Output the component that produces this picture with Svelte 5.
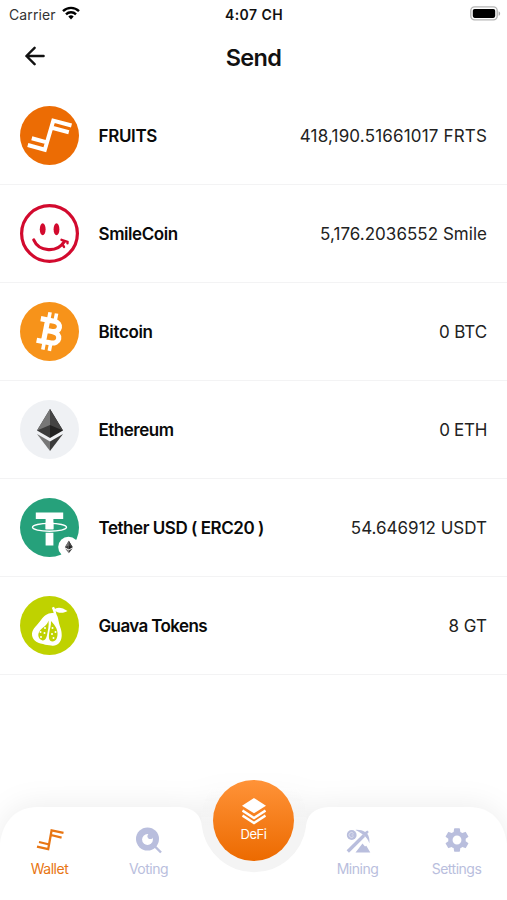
<script lang="ts">
	interface Token {
		id: string;
		name: string;
		balance: string;
		nameSpacing: number;
		balanceSpacing: number;
	}

	// spacing is in px, tuned per string
	const tokens: Token[] = [
		{ id: 'frts', name: 'FRUITS', balance: '418,190.51661017 FRTS', nameSpacing: -0.35, balanceSpacing: 0.17 },
		{ id: 'smile', name: 'SmileCoin', balance: '5,176.2036552 Smile', nameSpacing: -0.42, balanceSpacing: 0.03 },
		{ id: 'btc', name: 'Bitcoin', balance: '0 BTC', nameSpacing: -0.37, balanceSpacing: -0.1 },
		{ id: 'eth', name: 'Ethereum', balance: '0 ETH', nameSpacing: -0.5, balanceSpacing: -0.3 },
		{ id: 'usdt', name: 'Tether USD ( ERC20 )', balance: '54.646912 USDT', nameSpacing: -0.46, balanceSpacing: 0 },
		{ id: 'guava', name: 'Guava Tokens', balance: '8 GT', nameSpacing: -0.62, balanceSpacing: 0 }
	];

	const tabs = ['Wallet', 'Voting', 'DeFi', 'Mining', 'Settings'];
	let active = $state('Wallet');
</script>

{#snippet ethMark()}
	<path d="M30 9 17 30.5 30 38z" fill="#3c3c3c" />
	<path d="M30 9v29l13-7.5z" fill="#222" />
	<path d="M30 9 17 30.5 30 25z" fill="#777" />
	<path d="M30 9v16l13 5.5z" fill="#444" />
	<path d="m17 34 13 7.5V51z" fill="#777" />
	<path d="m43 34-13 7.5V51z" fill="#3b3b3b" />
{/snippet}

<div class="app">
	<div class="status">
		<div class="carrier">
			<span>Carrier</span>
			<svg width="18" height="14" viewBox="0 0 18 14">
				<g fill="none" stroke="#000" stroke-width="2.4">
					<path d="M1 5.2a11.4 11.4 0 0 1 16 0" />
					<path d="M4 8.3a7.1 7.1 0 0 1 10 0" />
				</g>
				<path d="M6.3 10.6a3.9 3.9 0 0 1 5.4 0L9 13.5z" />
			</svg>
		</div>
		<span class="time">4:07 CH</span>
		<svg class="battery" width="31" height="15" viewBox="0 0 31 15">
			<rect x=".8" y=".9" width="26.4" height="13" rx="3.8" fill="#fff" stroke="#b5b5b5" stroke-width="1.4" />
			<rect x="2.8" y="2.9" width="22.4" height="9" rx="1.8" />
			<path d="M28.6 5.2c2 .8 2 3.8 0 4.6z" fill="#aaa" />
		</svg>
	</div>

	<header>
		<button class="back" aria-label="Back">
			<svg width="20" height="20" viewBox="0 0 20 20">
				<path
					d="M18.6 10H1.5M9.6 1.8 1.4 10l8.2 8.2"
					fill="none"
					stroke="#111"
					stroke-width="2.4"
					stroke-linecap="round"
					stroke-linejoin="round"
				/>
			</svg>
		</button>
		<h1>Send</h1>
	</header>

	<main>
		{#each tokens as token (token.id)}
			<div class="row">
				<svg class="logo" viewBox="0 0 59 59">
					{#if token.id === 'frts'}
						<circle cx="29.5" cy="29.5" r="29.5" fill="#ec6c04" />
						<path
							d="M51.5 19.5 33.3 14.6 24.8 43.7 7.8 39M32 21.8l16.8 4.5M11.8 32.2l16 4.4"
							fill="none"
							stroke="#fff"
							stroke-width="4"
						/>
					{:else if token.id === 'smile'}
						<circle cx="29.5" cy="29.5" r="27.9" fill="#fff" stroke="#d20a2e" stroke-width="3.2" />
						<ellipse cx="22.7" cy="25.3" rx="2.9" ry="6" fill="#d20a2e" />
						<ellipse cx="36.5" cy="25.3" rx="2.9" ry="6" fill="#d20a2e" />
						<g fill="none" stroke="#d20a2e" stroke-linecap="round">
							<path d="M13.8 36c5 12 23.5 12.8 30.2 2" stroke-width="3.2" />
							<path d="m41.5 35.8 6 2v1.4M42.5 40.5l1.5 2.4" stroke-width="2.4" />
						</g>
					{:else if token.id === 'btc'}
						<circle cx="29.5" cy="29.5" r="29.5" fill="#f7931a" />
						<g transform="rotate(11 29.5 29.5)" fill="none" stroke="#fff">
							<path d="M26.4 10.5v8M33 10.5v8M26.4 40v8.5M33 40v8.5" stroke-width="3.6" />
							<path
								d="M18.5 18.5H32c8.6 0 8.6 10.5 0 10.5h-6.5M32 29c10.5 0 10.5 11.5 0 11.5H18.5M25.5 18.5v22"
								stroke-width="5.2"
							/>
						</g>
					{:else if token.id === 'eth'}
						<circle cx="29.5" cy="29.5" r="29.5" fill="#eff1f4" />
						{@render ethMark()}
					{:else if token.id === 'usdt'}
						<circle cx="29.5" cy="29.5" r="29.5" fill="#26a17b" />
						<path d="M15.8 14.5h27.4V21h-9.8v26.4h-7.8V21h-9.8z" fill="#fff" />
						<path d="M12.5 29.3c0 5.2 34 5.2 34 0" fill="none" stroke="#26a17b" stroke-width="3.2" />
						<ellipse cx="29.5" cy="29.3" rx="17" ry="3.9" fill="none" stroke="#fff" stroke-width="1.4" />
						<path d="M25.6 24.5h7.8V31h-7.8z" fill="#fff" />
						<circle cx="48.5" cy="49" r="10.3" fill="#fff" />
						<g transform="translate(39.8 40) scale(.3)">
							{@render ethMark()}
						</g>
					{:else}
						<circle cx="29.5" cy="29.5" r="29.5" fill="#bfd200" />
						<path
							d="M33.2 17c4 0 4.8 4.5 5.5 8.5 1 5.5 3.4 8.5 3 14.5-.5 7-5 10.5-10.5 9.5-3-.2-5-.3-8.2-1.5C16 47 11.600 43 12 37.500c.5-5 5.500-8.500 9-13.500 3-4.500 7-7.500 12.200-7z"
							fill="#fff"
						/>
						<path
							d="M28.5 24.5c-1 4.5-5.5 6.5-8.5 10-3 3.8-1.8 8.3 2 9.7 2.6.9 4.3-1.6 5-5 .9-4.6 2.2-9.7 1.5-14.7zM31 25c3 3.500 6 6.500 6.500 11.500.4 5-1.500 9-5 9-3.600 0-4-4-3.300-8.500.6-4 2-7.500 1.800-12z"
							fill="#bfd200"
						/>
						<g fill="#fff">
							<circle cx="25" cy="32" r="1" /><circle cx="20.5" cy="36" r="1" />
							<circle cx="24.5" cy="37" r="1" /><circle cx="21" cy="41" r="1" />
							<circle cx="32.5" cy="32" r="1" /><circle cx="32" cy="38" r="1" />
							<circle cx="35.5" cy="36" r="1" /><circle cx="33.5" cy="42" r="1" />
						</g>
						<path d="M34.2 19.5c-.5-3-1.2-5-2.4-7.8l2.2-1c1.5 2.5 2 5 2.5 8.5z" fill="#fff" />
						<path d="M34 14c2.5-3.5 8-3 13.5 1-4 2.6-9.5 2.6-13.5-1z" fill="#fff" />
					{/if}
				</svg>
				<span class="name" style="letter-spacing: {token.nameSpacing}px">{token.name}</span>
				<span class="balance" style="letter-spacing: {token.balanceSpacing}px">{token.balance}</span>
			</div>
		{/each}
	</main>

	<nav>
		<svg class="nav-shape" width="507" height="180" viewBox="0 0 507 180">
			<defs>
				<linearGradient id="notch" x1="0" y1="0" x2="0" y2="1">
					<stop offset=".2" stop-color="#f4f4f4" stop-opacity="0" />
					<stop offset=".55" stop-color="#f4f4f4" />
				</linearGradient>
			</defs>
			<circle cx="254" cy="100" r="53" fill="url(#notch)" />
			<path
				d="M0 124C3 101 16 87 38 87H176C193 87 201 94 202 107A52.5 52.5 0 0 0 306 107C307 94 315 87 332 87H469C491 87 504 101 507 124V180H0Z"
				fill="#fff"
			/>
		</svg>
		{#each tabs as tab}
			<button class="tab" class:active={active === tab} class:defi={tab === 'DeFi'} onclick={() => (active = tab)}>
				{#if tab === 'Wallet'}
					<svg width="28" height="28" viewBox="0 0 28 28">
						<path
							d="M27.5 6.8 15.6 4.3 12.2 23.2 1 20.6M15 9l10.6 2.7M3 16l10.3 2.5"
							fill="none"
							stroke="currentColor"
							stroke-width="2.3"
						/>
					</svg>
				{:else if tab === 'Voting'}
					<svg width="28" height="28" viewBox="0 0 28 28">
						<path d="m19.5 20 6.5 6.5" stroke="currentColor" stroke-width="2.4" />
						<circle cx="12.5" cy="13" r="11.5" fill="currentColor" />
						<circle cx="12.5" cy="13.5" r="5.4" fill="#fff" />
						<circle cx="15.3" cy="10.3" r="2.8" fill="currentColor" />
					</svg>
				{:else if tab === 'DeFi'}
					<svg width="24" height="27" viewBox="0 0 26 29">
						<path d="M13 0 26 8.2 13 16.4 0 8.2z" fill="#fff" />
						<path d="m.5 13.5 12.5 8 12.5-8M.5 19 13 27l12.5-8" fill="none" stroke="#fff" stroke-width="2.7" />
					</svg>
				{:else if tab === 'Mining'}
					<svg width="28" height="28" viewBox="0 0 28 28">
						<circle cx="7.7" cy="9" r="4.9" fill="currentColor" />
						<path d="M9.5 7.5a2.5 2.5 0 1 0 0 3M7.5 9h2" fill="none" stroke="#fff" stroke-opacity=".55" stroke-width=".9" />
						<path d="M3.8 25.5 20 9.5" stroke="currentColor" stroke-width="3.3" />
						<path
							d="M11.5 3.9c4-.2 7 .5 9.6 2.2l2.2-1.7 1.5 1.6-1.5 1.8c1.8 2.8 2.4 5.5 2.1 9.4-1.5-4-3.2-5.8-5.7-7.9-2.7-2.3-4.7-3.9-8.2-5.4z"
							fill="currentColor"
						/>
						<path d="m11.5 26.5 7-9 2.5 3 1.3-.8 4 6.8z" fill="currentColor" />
					</svg>
				{:else}
					<svg width="28" height="28" viewBox="0 0 24 24">
						<path
							d="M19.43 12.98a7.8 7.8 0 0 0 0-1.96l2.11-1.65a.5.5 0 0 0 .12-.64l-2-3.46a.5.5 0 0 0-.61-.22l-2.49 1a7.3 7.3 0 0 0-1.69-.98l-.38-2.65A.5.5 0 0 0 14 2h-4a.5.5 0 0 0-.49.42l-.38 2.65c-.61.25-1.17.59-1.69.98l-2.49-1a.5.5 0 0 0-.61.22l-2 3.46a.5.5 0 0 0 .12.64l2.11 1.65a7.900 7.900 0 0 0 0 1.960l-2.110 1.650a.5.5 0 0 0-.12.64l2 3.460c.12.220.39.3.61.22l2.490-1c.52.4 1.080.73 1.690.98l.38 2.650c.03.240.24.42.49.42h4c.25 0 .46-.18.49-.42l.38-2.650c.61-.25 1.170-.59 1.690-.98l2.490 1c.23.09.49 0 .61-.22l2-3.460a.5.5 0 0 0-.12-.64zM12 15.800a3.800 3.800 0 1 1 0-7.600 3.800 3.800 0 0 1 0 7.600z"
							fill="currentColor"
						/>
					</svg>
				{/if}
				<span>{tab}</span>
			</button>
		{/each}
	</nav>
</div>

<style>
	:global(body) {
		background: #fff;
	}

	.app {
		width: 507px;
		height: 900px;
		display: flex;
		flex-direction: column;
		overflow: hidden;
		background: #fff;
		color: #111;
		font-family: Inter, 'Liberation Sans', sans-serif;
	}

	button {
		border: 0;
		padding: 0;
		background: none;
		font: inherit;
		color: inherit;
	}

	svg {
		display: block;
		flex: none;
	}

	.status {
		height: 28px;
		padding: 0 6px 0 9px;
		box-sizing: border-box;
		display: grid;
		grid-template-columns: 1fr auto 1fr;
		align-items: center;
		font-size: 14px;
	}

	.carrier {
		display: flex;
		align-items: center;
		gap: 6px;
		color: #333;
		letter-spacing: 0.1px;
	}

	.carrier svg {
		margin-top: -2px;
	}

	.time {
		margin-right: 2px;
		font-weight: 600;
		letter-spacing: 0.45px;
		color: #111;
	}

	.battery {
		justify-self: end;
		margin-top: -1px;
	}

	header {
		height: 58.5px;
		padding: 0 25px;
		display: grid;
		grid-template-columns: 1fr auto 1fr;
		align-items: center;
	}

	.back {
		justify-self: start;
		margin: -2px 0 0;
	}

	h1 {
		margin: 0;
		font-size: 23.5px;
		font-weight: 600;
		letter-spacing: -0.7px;
	}

	main {
		flex: 1;
	}

	.row {
		height: 98.1px;
		padding: 0 20px;
		box-sizing: border-box;
		border-bottom: 1px solid #f3f3f4;
		display: flex;
		align-items: center;
	}

	.logo {
		width: 59px;
		height: 59px;
		margin-right: 19.5px;
	}

	.name,
	.balance {
		padding-top: 1.4px;
		font-size: 17px;
		white-space: pre;
	}

	.name {
		font-weight: 600;
		color: #0a0a0a;
	}

	.balance {
		margin-left: auto;
		color: #222;
	}

	nav {
		position: relative;
		height: 93px;
		display: flex;
	}

	.nav-shape {
		position: absolute;
		left: 0;
		bottom: 0;
		filter: drop-shadow(0 -2px 14px rgba(0, 0, 0, 0.07));
	}

	.tab {
		position: relative;
		width: 99px;
		padding-top: 19px;
		display: flex;
		flex-direction: column;
		align-items: center;
		gap: 6px;
		font-size: 14px;
		letter-spacing: -0.5px;
		color: #b9bedd;
	}

	.tab:last-child,
	.defi + .tab {
		margin-left: -1px;
		margin-right: 1px;
	}

	.active {
		color: #e87512;
	}

	.defi {
		width: 81px;
		height: 81px;
		margin: -27px auto 0;
		padding-top: 18px;
		box-sizing: border-box;
		gap: 1px;
		border-radius: 50%;
		background: linear-gradient(#ff9338, #ec6a00);
		color: #fff;
		font-size: 13px;
	}
</style>
